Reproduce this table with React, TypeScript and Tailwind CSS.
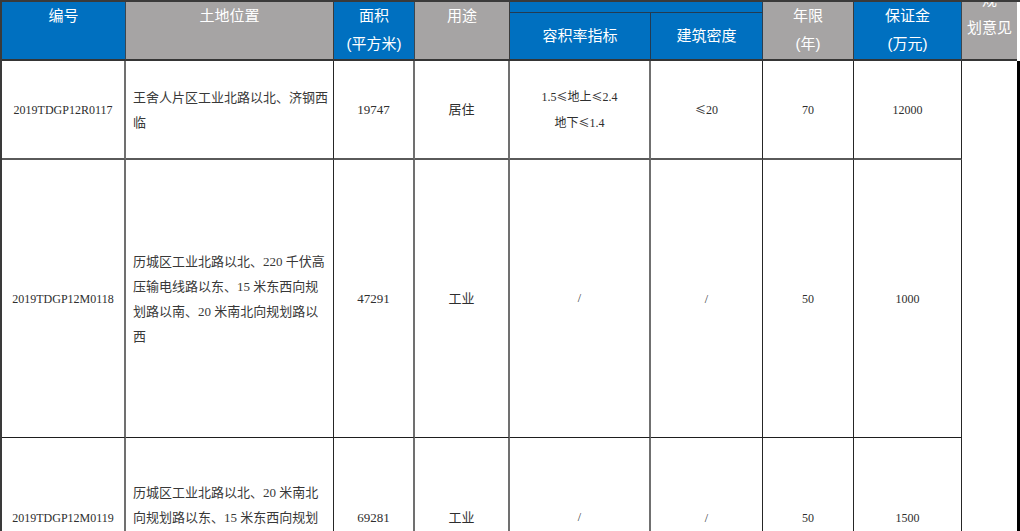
const head =
  "text-white text-[15px] leading-[28px] text-center font-['Liberation_Sans','Noto_Sans_CJK_SC',sans-serif]";
const body =
  "flex items-center justify-center text-[#2e2e2e] font-['Liberation_Serif','Noto_Sans_CJK_SC',serif]";
const gray = "border-r-2 border-r-[#707070]";
const black = "border-r border-r-[#262626]";

type Row = {
  code: string;
  loc: string[];
  area: string;
  use: string;
  far: string[];
  density: string;
  years: string;
  deposit: string;
  bottom: string;
};

const rows: Row[] = [
  {
    code: "2019TDGP12R0117",
    loc: ["王舍人片区工业北路以北、济钢西", "临"],
    area: "19747",
    use: "居住",
    far: ["1.5≤地上≤2.4", "地下≤1.4"],
    density: "≤20",
    years: "70",
    deposit: "12000",
    bottom: "border-b-2 border-b-[#5a5a5a]",
  },
  {
    code: "2019TDGP12M0118",
    loc: [
      "历城区工业北路以北、220 千伏高",
      "压输电线路以东、15 米东西向规",
      "划路以南、20 米南北向规划路以",
      "西",
    ],
    area: "47291",
    use: "工业",
    far: ["/"],
    density: "/",
    years: "50",
    deposit: "1000",
    bottom: "border-b border-b-[#1e1e1e]",
  },
  {
    code: "2019TDGP12M0119",
    loc: [
      "历城区工业北路以北、20 米南北",
      "向规划路以东、15 米东西向规划",
      "路以南",
    ],
    area: "69281",
    use: "工业",
    far: ["/"],
    density: "/",
    years: "50",
    deposit: "1500",
    bottom: "border-b border-b-[#1e1e1e]",
  },
];

// the ≤ sign looks better from the CJK font
function Le({ text }: { text: string }) {
  const parts = text.split("≤");
  return (
    <span>
      {parts.map((p, i) => (
        <span key={i}>
          {i > 0 && (
            <span className="font-['Noto_Sans_CJK_SC',sans-serif] text-[11px]">≤</span>
          )}
          {p}
        </span>
      ))}
    </span>
  );
}

export default function App() {
  return (
    <div className="h-[531px] w-[1020px] overflow-hidden bg-white">
      <div className="grid grid-cols-[124px_208px_81px_95px_141px_112px_91px_108px_55px_3px] grid-rows-[11px_48px_99px_278px_160px] border-t-2 border-l-2 border-[#3a3a3a]">
        {/* header */}
        <div className={`row-span-2 bg-[#0070c0] border-r border-r-[#3b4650] border-b-2 border-b-[#353535] ${head}`}>
          编号
        </div>
        <div className={`row-span-2 bg-[#a6a4a4] border-r border-r-[#3b3b3b] border-b-2 border-b-[#353535] ${head}`}>
          土地位置
        </div>
        <div className={`row-span-2 bg-[#0070c0] border-r border-r-[#3b4650] border-b-2 border-b-[#353535] ${head}`}>
          面积
          <br />
          (平方米)
        </div>
        <div className={`row-span-2 bg-[#a6a4a4] border-r border-r-[#3b3b3b] border-b-2 border-b-[#353535] ${head}`}>
          用途
        </div>
        <div className="col-span-2 bg-[#0070c0] border-r border-r-[#2c3e50] border-b border-b-[#233b52]" />
        <div className={`row-span-2 bg-[#a6a4a4] border-r border-r-[#3b3b3b] border-b-2 border-b-[#353535] ${head}`}>
          年限
          <br />
          (年)
        </div>
        <div className={`row-span-2 bg-[#0070c0] border-r border-r-[#3b4650] border-b-2 border-b-[#353535] ${head}`}>
          保证金
          <br />
          (万元)
        </div>
        <div className={`row-span-2 overflow-hidden bg-[#a6a4a4] border-b-2 border-b-[#353535] ${head}`}>
          <div className="-mt-[16px]">
            规
            <br />
            划意见
          </div>
        </div>
        <div className="row-span-2 bg-white" />
        <div className={`flex items-center justify-center bg-[#0070c0] border-r border-r-[#233b52] border-b-2 border-b-[#353535] ${head}`}>
          容积率指标
        </div>
        <div className={`flex items-center justify-center bg-[#0070c0] border-r border-r-[#2c3e50] border-b-2 border-b-[#353535] ${head}`}>
          建筑密度
        </div>

        {/* body */}
        {rows.map((r, i) => (
          <div key={r.code} className="contents">
            <div className={`${body} ${gray} ${r.bottom} text-[12px]`}>{r.code}</div>
            <div className={`flex flex-col justify-center pl-[7px] text-[13px] leading-[25px] text-[#383838] font-['Liberation_Serif','Noto_Sans_CJK_SC',serif] whitespace-nowrap ${black} ${r.bottom}`}>
              {r.loc.map((l) => (
                <span key={l}>{l}</span>
              ))}
            </div>
            <div className={`${body} ${gray} ${r.bottom} text-[13px]`}>{r.area}</div>
            <div className={`${body} ${gray} ${r.bottom} text-[13px]`}>{r.use}</div>
            <div className={`${body} ${gray} ${r.bottom} flex-col text-[12px] leading-[25px]`}>
              {r.far.map((f) => (
                <Le key={f} text={f} />
              ))}
            </div>
            <div className={`${body} ${black} ${r.bottom} text-[12px]`}>
              <Le text={r.density} />
            </div>
            <div className={`${body} ${black} ${r.bottom} text-[12px]`}>{r.years}</div>
            <div className={`${body} ${black} ${r.bottom} text-[12px]`}>{r.deposit}</div>
            {i === 0 && (
              <>
                <div className="row-span-3 col-start-9 row-start-3 bg-white" />
                <div className="row-span-3 col-start-10 row-start-3 bg-black" />
              </>
            )}
          </div>
        ))}
      </div>
    </div>
  );
}
